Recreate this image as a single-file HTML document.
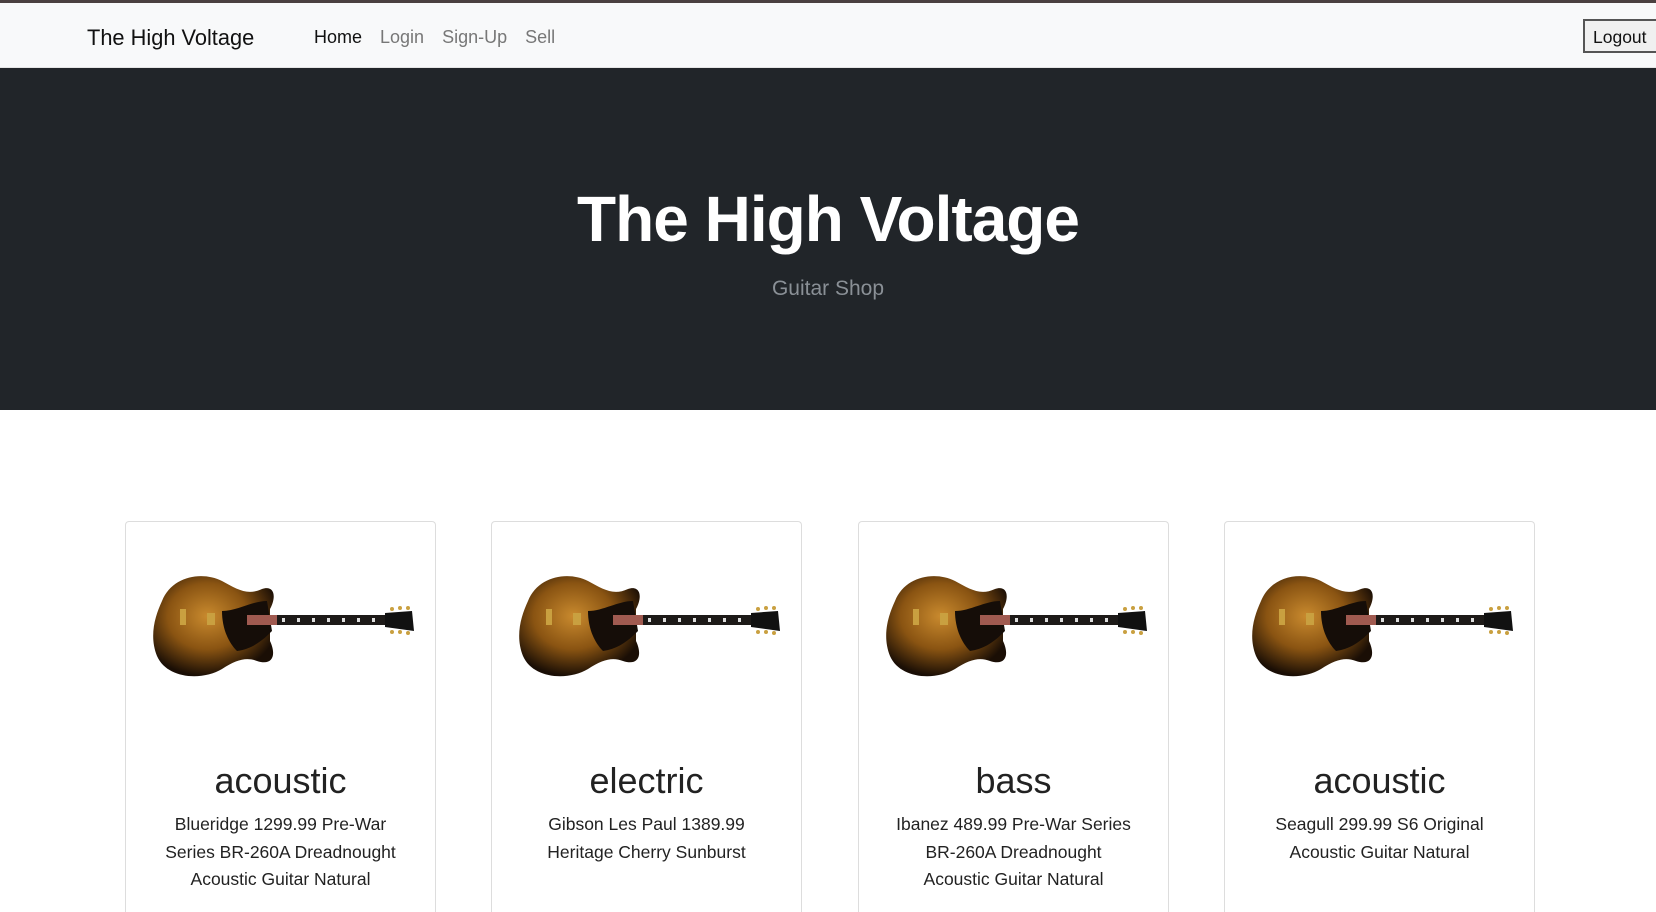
<!DOCTYPE html>
<html><head><meta charset="utf-8"><style>
*{box-sizing:border-box;margin:0;padding:0}
html,body{width:1656px;height:912px;overflow:hidden}
body{background:#fff;font-family:"Liberation Sans",sans-serif;color:#212529}
#wrap{position:relative;width:1656px;height:912px;overflow:hidden}
.top{height:3px;background:#4a4040}
nav{height:65px;background:#f8f9fa;position:relative;border-bottom:1px solid #e5e5e5}
.brand{position:absolute;left:87px;top:22px;font-size:21.8px;color:#111}
.links{position:absolute;left:314px;top:24px;font-size:18px}
.links span{margin-right:18px;color:#777}
.links span:first-child{color:#111}
.logout{position:absolute;left:1583px;top:16px;width:73px;height:34px;border:2px solid #555;border-right:none;background:#f0f0f0;font-size:17.5px;padding:6px 8px;color:#111;white-space:nowrap;overflow:hidden}
.hero{height:342px;background:#212529;text-align:center;color:#fff}
.hero h1{font-size:64px;font-weight:700;padding-top:119px;line-height:1;letter-spacing:-1px}
.hero p{font-size:21px;color:#8a9096;margin-top:26px}
.card{position:absolute;top:521px;width:311px;height:391px;border:1px solid #ddd;border-bottom:none;border-radius:4px 4px 0 0;text-align:center}
.card svg{position:absolute;left:26px;top:49px}
.card h2{position:absolute;top:238px;left:0;right:0;font-size:36px;font-weight:500;color:#222}
.card p{position:absolute;top:289px;left:33px;right:33px;font-size:17.5px;line-height:27.5px;color:#222}
</style></head><body><div id="wrap">
<svg width="0" height="0" style="position:absolute"><defs>
<radialGradient id="sb" cx="0.45" cy="0.4" r="0.6"><stop offset="0" stop-color="#c98a2e"/><stop offset="0.55" stop-color="#8a5412"/><stop offset="1" stop-color="#1a0e05"/></radialGradient>
<symbol id="g" viewBox="0 0 263 108">
<path d="M10 30 C20 5 50 0 70 10 C85 18 95 25 110 18 C122 14 125 25 118 38 L118 70 C125 85 120 95 105 90 C95 86 85 88 70 98 C50 110 15 108 5 85 C-3 65 3 45 10 30Z" fill="url(#sb)"/>
<path d="M70 40 C85 40 100 30 115 30 L120 60 C110 70 100 78 85 80 C75 70 70 55 70 40Z" fill="#150d08"/>
<rect x="95" y="44" width="140" height="10" fill="#1d1a18"/>
<rect x="95" y="44" width="30" height="10" fill="#a05a50"/>
<g fill="#ddd"><rect x="130" y="47" width="3" height="4"/><rect x="145" y="47" width="3" height="4"/><rect x="160" y="47" width="3" height="4"/><rect x="175" y="47" width="3" height="4"/><rect x="190" y="47" width="3" height="4"/><rect x="205" y="47" width="3" height="4"/><rect x="220" y="47" width="3" height="4"/></g>
<path d="M233 42 L260 40 L262 60 L233 56Z" fill="#111"/>
<g fill="#c9a040"><circle cx="240" cy="38" r="2"/><circle cx="248" cy="37" r="2"/><circle cx="256" cy="37" r="2"/><circle cx="240" cy="61" r="2"/><circle cx="248" cy="61" r="2"/><circle cx="256" cy="62" r="2"/></g>
<rect x="55" y="42" width="8" height="12" fill="#c9a040"/><rect x="28" y="38" width="6" height="16" fill="#c9a040"/>
</symbol></defs></svg>
<div class="top"></div>
<nav><div class="brand">The High Voltage</div>
<div class="links"><span>Home</span><span>Login</span><span>Sign-Up</span><span>Sell</span></div>
<div class="logout">Logout</div></nav>
<div class="hero"><h1>The High Voltage</h1><p>Guitar Shop</p></div>
<div class="card" style="left:125px"><svg width="263" height="108"><use href="#g"/></svg><h2>acoustic</h2><p>Blueridge 1299.99 Pre-War Series BR-260A Dreadnought Acoustic Guitar Natural</p></div>
<div class="card" style="left:491px"><svg width="263" height="108"><use href="#g"/></svg><h2>electric</h2><p>Gibson Les Paul 1389.99 Heritage Cherry Sunburst</p></div>
<div class="card" style="left:858px"><svg width="263" height="108"><use href="#g"/></svg><h2>bass</h2><p>Ibanez 489.99 Pre-War Series BR-260A Dreadnought Acoustic Guitar Natural</p></div>
<div class="card" style="left:1224px"><svg width="263" height="108"><use href="#g"/></svg><h2>acoustic</h2><p>Seagull 299.99 S6 Original Acoustic Guitar Natural</p></div>
</div></body></html>
